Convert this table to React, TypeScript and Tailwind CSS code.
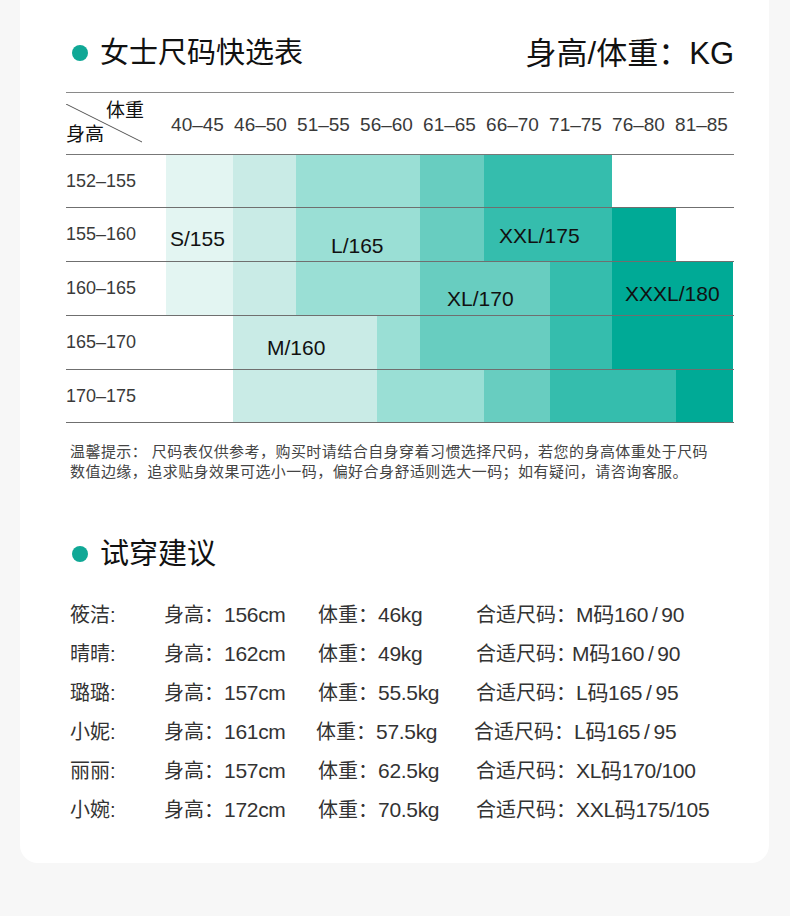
const FONT = '"Liberation Sans", "Noto Sans CJK SC", sans-serif';

const WEIGHTS = ['40–45', '46–50', '51–55', '56–60', '61–65', '66–70', '71–75', '76–80', '81–85'];

// colour blocks per row, widths in px starting at the first weight column
type Seg = [number, string];
const ROWS: { label: string; h: string; segs: Seg[] }[] = [
  {
    label: '152–155',
    h: 'h-[53px]',
    segs: [[67, 'bg-[#e3f5f2]'], [63, 'bg-[#c9ebe6]'], [124, 'bg-[#9adfd5]'], [64, 'bg-[#68cdc0]'], [128, 'bg-[#35bdad]'], [121, 'bg-white']],
  },
  {
    label: '155–160',
    h: 'h-[54px]',
    segs: [[67, 'bg-[#e3f5f2]'], [63, 'bg-[#c9ebe6]'], [124, 'bg-[#9adfd5]'], [64, 'bg-[#68cdc0]'], [128, 'bg-[#35bdad]'], [64, 'bg-[#00aa96]'], [57, 'bg-white']],
  },
  {
    label: '160–165',
    h: 'h-[54px]',
    segs: [[67, 'bg-[#e3f5f2]'], [63, 'bg-[#c9ebe6]'], [124, 'bg-[#9adfd5]'], [130, 'bg-[#68cdc0]'], [62, 'bg-[#35bdad]'], [121, 'bg-[#00aa96]']],
  },
  {
    label: '165–170',
    h: 'h-[54px]',
    segs: [[67, 'bg-white'], [144, 'bg-[#c9ebe6]'], [43, 'bg-[#9adfd5]'], [130, 'bg-[#68cdc0]'], [62, 'bg-[#35bdad]'], [121, 'bg-[#00aa96]']],
  },
  {
    label: '170–175',
    h: 'h-[53px]',
    segs: [[67, 'bg-white'], [144, 'bg-[#c9ebe6]'], [107, 'bg-[#9adfd5]'], [66, 'bg-[#68cdc0]'], [126, 'bg-[#35bdad]'], [57, 'bg-[#00aa96]']],
  },
];

const SIZE_LABELS = [
  { text: 'S/155', cls: 'left-[104px] top-[72px]' },
  { text: 'L/165', cls: 'left-[265px] top-[79px]' },
  { text: 'XXL/175', cls: 'left-[433px] top-[69px]' },
  { text: 'XL/170', cls: 'left-[381px] top-[132px]' },
  { text: 'XXXL/180', cls: 'left-[559px] top-[127px]' },
  { text: 'M/160', cls: 'left-[201px] top-[181px]' },
];

const TRIES = [
  { name: '筱洁:', height: '156cm', weight: '46kg', size: 'M码160\u2009/\u200990' },
  { name: '晴晴:', height: '162cm', weight: '49kg', size: 'M码160\u2009/\u200990', tight: true },
  { name: '璐璐:', height: '157cm', weight: '55.5kg', size: 'L码165\u2009/\u200995' },
  { name: '小妮:', height: '161cm', weight: '57.5kg', size: 'L码165\u2009/\u200995', shift: true },
  { name: '丽丽:', height: '157cm', weight: '62.5kg', size: 'XL码170/100' },
  { name: '小婉:', height: '172cm', weight: '70.5kg', size: 'XXL码175/105' },
];

function Dot() {
  return <span className="ml-[6px] mr-[12px] inline-block h-4 w-4 rounded-full bg-[#10a896]" />;
}

export default function App() {
  return (
    <div className="min-h-[916px] bg-[#f7f7f7]" style={{ fontFamily: FONT }}>
      <div className="ml-[20px] w-[749px] rounded-b-[18px] bg-white pb-[34px] pl-[46px] pr-[35px] pt-[33px]">
        {/* title */}
        <div className="flex h-[40px] items-center justify-between">
          <div className="flex items-center">
            <Dot />
            <span className="text-[29px] leading-none text-[#111]">女士尺码快选表</span>
          </div>
          <span className="text-[31px] leading-none text-[#111]">身高/体重：KG</span>
        </div>

        {/* chart */}
        <div className="mt-[19px] border-t border-[#8a8a8a]">
          <div className="flex h-[62px] border-b border-[#777]">
            <div className="relative w-[100px] shrink-0">
              <svg className="absolute left-0 top-[11px]" width="77" height="39" viewBox="0 0 77 39">
                <line x1="0" y1="0" x2="76" y2="38" stroke="#555" strokeWidth="1" />
              </svg>
              <span className="absolute left-[40px] top-[8px] text-[19px] leading-none text-[#111]">体重</span>
              <span className="absolute left-0 top-[32px] text-[19px] leading-none text-[#111]">身高</span>
            </div>
            {WEIGHTS.map((w) => (
              <div key={w} className="flex w-[63px] items-center justify-center pt-[4px] text-[19px] text-[#3a3a3a]">
                {w}
              </div>
            ))}
          </div>

          <div className="relative">
            {ROWS.map((r) => (
              <div key={r.label} className={`flex border-b border-[#6f6f6f] ${r.h}`}>
                <div className="flex w-[100px] shrink-0 items-center text-[18px] text-[#3a3a3a]">{r.label}</div>
                {r.segs.map(([w, c], i) => (
                  <div key={i} className={c} style={{ width: w }} />
                ))}
              </div>
            ))}
            {SIZE_LABELS.map((l) => (
              <span key={l.text} className={`absolute text-[21px] leading-[24px] text-[#111] ${l.cls}`}>
                {l.text}
              </span>
            ))}
          </div>
        </div>

        {/* note */}
        <div className="mt-[19px] whitespace-nowrap pl-[4px] text-[15px] leading-[20px] tracking-[0.45px] text-[#444]">
          <p>温馨提示： 尺码表仅供参考，购买时请结合自身穿着习惯选择尺码，若您的身高体重处于尺码</p>
          <p>数值边缘，追求贴身效果可选小一码，偏好合身舒适则选大一码；如有疑问，请咨询客服。</p>
        </div>

        {/* try-on */}
        <div className="mt-[52px] flex h-[40px] items-center">
          <Dot />
          <span className="text-[29px] leading-none text-[#111]">试穿建议</span>
        </div>

        <div className="mt-[21px] pl-[4px] text-[20px] text-[#333]">
          {TRIES.map((t) => (
            <div key={t.name} className="flex h-[39px] items-center">
              <span className="w-[94px] shrink-0">{t.name}</span>
              <span className="w-[154px] shrink-0">
                身高：<span className="text-[21px] tracking-[-0.3px]">{t.height}</span>
              </span>
              <span className={`w-[158px] shrink-0 ${t.shift ? '-ml-[2px] pr-[2px]' : ''}`}>
                体重：<span className="text-[21px] tracking-[-0.3px]">{t.weight}</span>
              </span>
              <span>
                合适尺码：
                <span className={`text-[21px] tracking-[-0.3px] ${t.tight ? '-ml-[4px]' : ''}`}>{t.size}</span>
              </span>
            </div>
          ))}
        </div>
      </div>
    </div>
  );
}
